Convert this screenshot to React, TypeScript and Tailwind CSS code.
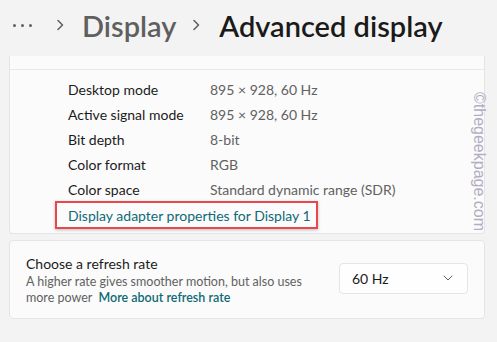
import React from "react";

const font = { fontFamily: 'Lato, "Noto Sans", sans-serif' };

function Chevron({ className }: { className?: string }) {
  return (
    <svg width="8" height="12" viewBox="0 0 8 12" className={className}>
      <path d="M2 1.5 L6.5 6 L2 10.5" fill="none" stroke="currentColor" strokeWidth="1.5" strokeLinecap="round" strokeLinejoin="round" />
    </svg>
  );
}

const rows: [string, string][] = [
  ["Desktop mode", "895 × 928, 60 Hz"],
  ["Active signal mode", "895 × 928, 60 Hz"],
  ["Bit depth", "8-bit"],
  ["Color format", "RGB"],
  ["Color space", "Standard dynamic range (SDR)"],
];

export default function App() {
  return (
    <div className="relative w-[497px] h-[342px] overflow-hidden bg-[#f3f3f3]" style={font}>
      {/* header */}
      <div className="h-[56px] flex items-center pl-[13px] pb-[6px]">
        <div className="flex gap-[5px] items-center">
          <span className="w-[3px] h-[3px] rounded-full bg-[#5f5f5f]" />
          <span className="w-[3px] h-[3px] rounded-full bg-[#5f5f5f]" />
          <span className="w-[3px] h-[3px] rounded-full bg-[#5f5f5f]" />
        </div>
        <Chevron className="ml-[24px] text-[#5f5f5f]" />
        <span className="ml-[18px] text-[29px] font-semibold text-[#5f5f5f] leading-none">Display</span>
        <Chevron className="ml-[16px] text-[#5f5f5f]" />
        <span className="ml-[19px] text-[29px] font-semibold text-[#1a1a1a] leading-none">Advanced display</span>
      </div>

      {/* card 1 */}
      <div className="ml-[9px] w-[476px] h-[178px] bg-[#fbfbfb] border-x border-b border-[#e5e5e5] rounded-b-[4px]">
        <div className="h-[14px] border-b border-[#e9e9e9]" />
        <div className="pt-[7px]">
          {rows.map(([k, v]) => (
            <div key={k} className="h-[25px] flex items-center text-[14px]">
              <span className="ml-[58px] w-[142px] text-[#1b1b1b]">{k}</span>
              <span className="text-[#616161]">{v}</span>
            </div>
          ))}
          <div className="ml-[45px] mt-[-1px] w-[263px] h-[28px] border-2 border-[#e8474c] flex items-center pl-[11px] shadow-[0_1px_3px_rgba(0,0,0,0.25)]">
            <span className="whitespace-nowrap text-[14px] text-[#0e6a76]">Display adapter properties for Display 1</span>
          </div>
        </div>
      </div>

      {/* card 2 */}
      <div className="ml-[9px] mt-[6px] w-[476px] h-[79px] bg-[#fbfbfb] border border-[#e5e5e5] rounded-[4px] flex items-center pl-[16px] pr-[16px]">
        <div className="flex-1 pt-[1px]">
          <div className="text-[14px] text-[#1b1b1b] leading-[20px]">Choose a refresh rate</div>
          <div className="text-[12.5px] text-[#616161] leading-[16px] w-[285px]">
            A higher rate gives smoother motion, but also uses more power&nbsp;&nbsp;
            <span className="font-semibold text-[#0e6a76]">More about refresh rate</span>
          </div>
        </div>
        <div className="w-[129px] h-[31px] bg-[#fefefe] border border-[#e5e5e5] rounded-[4px] flex items-center pl-[12px] pr-[14px] mb-[3px]">
          <span className="flex-1 text-[14px] text-[#1b1b1b]">60 Hz</span>
          <svg width="10" height="6" viewBox="0 0 10 6">
            <path d="M1 1 L5 5 L9 1" fill="none" stroke="#606060" strokeWidth="1" strokeLinecap="round" strokeLinejoin="round" />
          </svg>
        </div>
      </div>

      {/* watermark */}
      <div
        className="absolute left-[468px] top-[92px] text-[16px] text-[#b1adc2] origin-top-left whitespace-nowrap"
        style={{ fontFamily: '"Liberation Sans", Arial, sans-serif', transform: "translateX(23px) rotate(90deg)" }}
      >
        ©thegeekpage.com
      </div>
    </div>
  );
}
